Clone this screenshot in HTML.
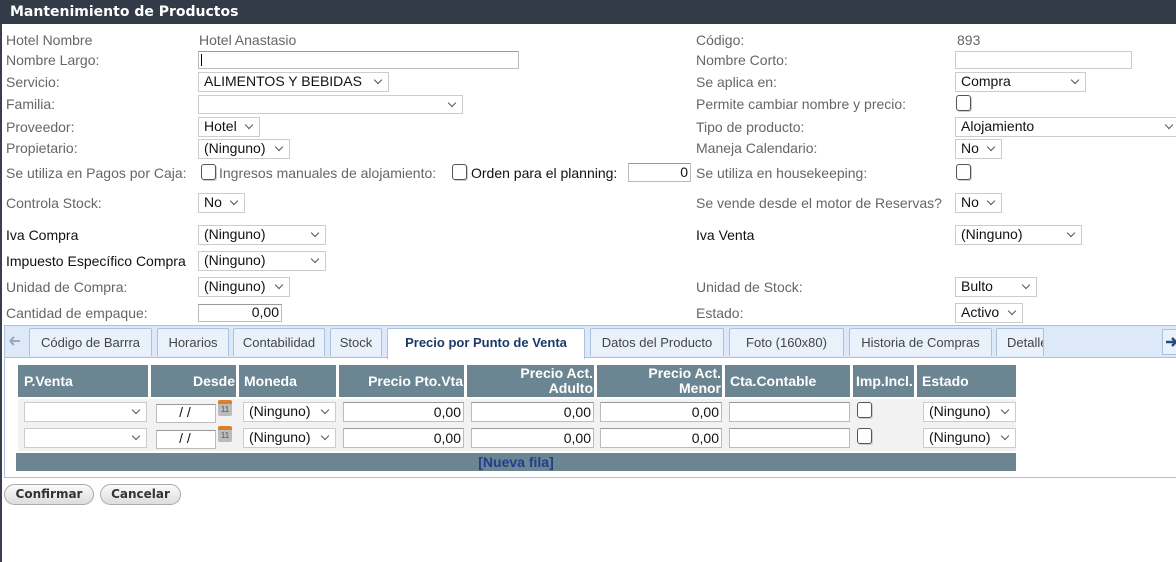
<!DOCTYPE html>
<html><head><meta charset="utf-8"><style>
*{box-sizing:border-box;margin:0;padding:0}
body{width:1176px;height:562px;position:relative;background:#fff;font-family:"Liberation Sans",Arial,sans-serif;font-size:14px;color:#666;overflow:hidden}
.a{position:absolute;white-space:nowrap}
.t{position:absolute;left:0;top:0;width:1176px;height:24px;background:#333a48;color:#fff;font-family:"DejaVu Sans",sans-serif;font-weight:bold;font-size:14px;padding:4px 0 0 10px}
.l{position:absolute;line-height:16px;white-space:nowrap}
.k{color:#111}
.in{position:absolute;border:1px solid #bbb;border-top-color:#999;background:#fff;color:#111;font-size:14px;text-align:right;padding-right:2px;line-height:15px}
.s{position:absolute;border:1px solid #ccc;background:#fff;color:#111;font-size:14px;padding-left:5px;line-height:17px;white-space:nowrap}
.s:after{content:"";position:absolute;right:7px;top:4px;width:5px;height:5px;border-right:1px solid #555;border-bottom:1px solid #555;transform:rotate(45deg)}
.c{position:absolute;width:15px;height:16px;border:1px solid #555;border-radius:3px;background:#fff;box-shadow:1px 1px 0 #ccc}
.tb{position:absolute;top:328px;height:28px;border:1px solid #a9c2e0;border-bottom:none;background:#e9f1fb;color:#444;font-size:13px;padding-top:6px;text-align:center;border-radius:2px 2px 0 0}
.h{position:absolute;top:365px;height:32px;background:#6b8592;color:#fff;font-weight:bold;font-size:14px;line-height:15px}
.cell{position:absolute;background:#f2f2f2}
</style></head><body>
<div class="a" style="left:0;top:0;width:2px;height:562px;background:#3a3f4c"></div>
<div class="t">Mantenimiento de Productos</div>
<div class="l" style="left:6px;top:32px">Hotel Nombre</div><div class="l" style="left:199px;top:32px">Hotel Anastasio</div>
<div class="l" style="left:6px;top:52px">Nombre Largo:</div><div class="in" style="left:198px;top:51px;width:321px;height:18px"><span style="position:absolute;left:2px;top:2px;width:1px;height:12px;background:#000"></span></div>
<div class="l" style="left:6px;top:74px">Servicio:</div><div class="s" style="left:198px;top:72px;width:191px;height:20px">ALIMENTOS Y BEBIDAS</div>
<div class="l" style="left:6px;top:96px">Familia:</div><div class="s" style="left:198px;top:95px;width:265px;height:19px"></div>
<div class="l" style="left:6px;top:119px">Proveedor:</div><div class="s" style="left:198px;top:117px;width:62px;height:20px">Hotel</div>
<div class="l" style="left:6px;top:140px">Propietario:</div><div class="s" style="left:198px;top:139px;width:92px;height:20px">(Ninguno)</div>
<div class="l" style="left:6px;top:165px">Se utiliza en Pagos por Caja:</div><div class="c" style="left:201px;top:164px"></div>
<div class="l" style="left:219px;top:165px">Ingresos manuales de alojamiento:</div><div class="c" style="left:452px;top:164px"></div>
<div class="l k" style="left:471px;top:165px">Orden para el planning:</div><div class="in" style="left:628px;top:163px;width:63px;height:19px;line-height:17px">0</div>
<div class="l" style="left:6px;top:195px">Controla Stock:</div><div class="s" style="left:198px;top:193px;width:47px;height:20px">No</div>
<div class="l k" style="left:6px;top:227px">Iva Compra</div><div class="s" style="left:198px;top:225px;width:128px;height:20px">(Ninguno)</div>
<div class="l k" style="left:6px;top:253px">Impuesto Específico Compra</div><div class="s" style="left:198px;top:251px;width:128px;height:20px">(Ninguno)</div>
<div class="l" style="left:6px;top:279px">Unidad de Compra:</div><div class="s" style="left:198px;top:277px;width:92px;height:20px">(Ninguno)</div>
<div class="l" style="left:6px;top:305px">Cantidad de empaque:</div><div class="in" style="left:198px;top:304px;width:84px;height:18px">0,00</div>

<div class="l" style="left:696px;top:32px">Código:</div><div class="l" style="left:957px;top:32px">893</div>
<div class="l" style="left:696px;top:52px">Nombre Corto:</div><div class="in" style="left:955px;top:51px;width:177px;height:18px;border-color:#ccc"></div>
<div class="l" style="left:696px;top:74px">Se aplica en:</div><div class="s" style="left:955px;top:72px;width:131px;height:20px">Compra</div>
<div class="l" style="left:696px;top:96px">Permite cambiar nombre y precio:</div><div class="c" style="left:956px;top:95px"></div>
<div class="l" style="left:696px;top:119px">Tipo de producto:</div><div class="s" style="left:955px;top:117px;width:225px;height:20px">Alojamiento</div>
<div class="l" style="left:696px;top:140px">Maneja Calendario:</div><div class="s" style="left:955px;top:139px;width:47px;height:20px">No</div>
<div class="l" style="left:696px;top:165px">Se utiliza en housekeeping:</div><div class="c" style="left:956px;top:164px"></div>
<div class="l" style="left:696px;top:195px">Se vende desde el motor de Reservas?</div><div class="s" style="left:955px;top:193px;width:47px;height:20px">No</div>
<div class="l k" style="left:696px;top:227px">Iva Venta</div><div class="s" style="left:955px;top:225px;width:127px;height:20px">(Ninguno)</div>
<div class="l" style="left:696px;top:279px">Unidad de Stock:</div><div class="s" style="left:955px;top:277px;width:82px;height:20px">Bulto</div>
<div class="l" style="left:696px;top:305px">Estado:</div><div class="s" style="left:955px;top:303px;width:68px;height:20px">Activo</div>

<div class="a" style="left:4px;top:325px;width:1172px;height:153px;border:1px solid #a9c2e0;border-right:none"></div>
<div class="a" style="left:5px;top:326px;width:1171px;height:32px;background:#dde9f8;border-bottom:1px solid #a9c2e0"></div>
<svg class="a" style="left:9px;top:336px" width="12" height="10"><path d="M1 5H11M1 5L5 1M1 5L5 9" stroke="#9ab" stroke-width="2" fill="none"/></svg>
<div class="a" style="left:1162px;top:329px;width:16px;height:26px;border:1px solid #a9c2e0;background:#e9f1fb"></div>
<svg class="a" style="left:1165px;top:337px" width="12" height="10"><path d="M1 5H11M11 5L7 1M11 5L7 9" stroke="#2b4a78" stroke-width="2.4" fill="none"/></svg>
<div class="tb" style="left:29px;width:123px">Código de Barrra</div>
<div class="tb" style="left:157px;width:72px">Horarios</div>
<div class="tb" style="left:233px;width:92px">Contabilidad</div>
<div class="tb" style="left:330px;width:52px">Stock</div>
<div class="tb" style="left:387px;width:198px;height:31px;background:#fff;color:#1b3a6b;font-weight:bold">Precio por Punto de Venta</div>
<div class="tb" style="left:590px;width:134px">Datos del Producto</div>
<div class="tb" style="left:729px;width:115px">Foto (160x80)</div>
<div class="tb" style="left:849px;width:143px">Historia de Compras</div>
<div class="tb" style="left:996px;width:48px;overflow:hidden;text-align:left;padding-left:10px">Detalle</div>

<div class="h" style="left:18px;width:130px;padding:9px 0 0 6px">P.Venta</div>
<div class="h" style="left:151px;width:85px;text-align:right;padding:9px 1px 0 0">Desde</div>
<div class="h" style="left:239px;width:97px;padding:9px 0 0 5px">Moneda</div>
<div class="h" style="left:339px;width:125px;text-align:right;padding:9px 1px 0 0">Precio Pto.Vta</div>
<div class="h" style="left:467px;width:127px;text-align:right;padding:1px 1px 0 0">Precio Act.<br>Adulto</div>
<div class="h" style="left:597px;width:125px;text-align:right;padding:1px 1px 0 0">Precio Act.<br>Menor</div>
<div class="h" style="left:725px;width:125px;padding:9px 0 0 5px">Cta.Contable</div>
<div class="h" style="left:853px;width:61px;padding:9px 0 0 3px">Imp.Incl.</div>
<div class="h" style="left:917px;width:99px;padding:9px 0 0 5px">Estado</div>

<div class="cell" style="left:18px;top:399px;width:998px;height:52px"></div>
<div class="s" style="left:24px;top:402px;width:123px;height:20px"></div>
<div class="in" style="left:156px;top:404px;width:60px;height:19px;text-align:center">/ /</div>
<div class="a" style="left:218px;top:400px;width:14px;height:16px;background:#bbb;border-top:4px solid #d9822b;border-radius:2px;font-size:8px;color:#555;text-align:center;line-height:11px">11</div>
<div class="s" style="left:243px;top:402px;width:93px;height:20px">(Ninguno)</div>
<div class="in" style="left:343px;top:402px;width:121px;height:20px;line-height:18px">0,00</div>
<div class="in" style="left:471px;top:402px;width:123px;height:20px;line-height:18px">0,00</div>
<div class="in" style="left:600px;top:402px;width:122px;height:20px;line-height:18px">0,00</div>
<div class="in" style="left:729px;top:402px;width:121px;height:20px"></div>
<div class="c" style="left:857px;top:402px"></div>
<div class="s" style="left:923px;top:402px;width:93px;height:20px">(Ninguno)</div>

<div class="s" style="left:24px;top:428px;width:123px;height:20px"></div>
<div class="in" style="left:156px;top:430px;width:60px;height:19px;text-align:center">/ /</div>
<div class="a" style="left:218px;top:426px;width:14px;height:16px;background:#bbb;border-top:4px solid #d9822b;border-radius:2px;font-size:8px;color:#555;text-align:center;line-height:11px">11</div>
<div class="s" style="left:243px;top:428px;width:93px;height:20px">(Ninguno)</div>
<div class="in" style="left:343px;top:428px;width:121px;height:20px;line-height:18px">0,00</div>
<div class="in" style="left:471px;top:428px;width:123px;height:20px;line-height:18px">0,00</div>
<div class="in" style="left:600px;top:428px;width:122px;height:20px;line-height:18px">0,00</div>
<div class="in" style="left:729px;top:428px;width:121px;height:20px"></div>
<div class="c" style="left:857px;top:428px"></div>
<div class="s" style="left:923px;top:428px;width:93px;height:20px">(Ninguno)</div>

<div class="a" style="left:16px;top:453px;width:1000px;height:18px;background:#6b8592;color:#1e3f8a;font-weight:bold;text-align:center;line-height:18px;font-size:14px">[Nueva fila]</div>

<div class="a" style="left:4px;top:484px;width:90px;height:21px;border:1px solid #aaa;border-radius:11px;background:linear-gradient(#fafafa,#ddd);color:#333;font-family:'DejaVu Sans',sans-serif;font-weight:bold;font-size:12px;text-align:center;line-height:19px">Confirmar</div>
<div class="a" style="left:100px;top:484px;width:81px;height:21px;border:1px solid #aaa;border-radius:11px;background:linear-gradient(#fafafa,#ddd);color:#333;font-family:'DejaVu Sans',sans-serif;font-weight:bold;font-size:12px;text-align:center;line-height:19px">Cancelar</div>
</body></html>
